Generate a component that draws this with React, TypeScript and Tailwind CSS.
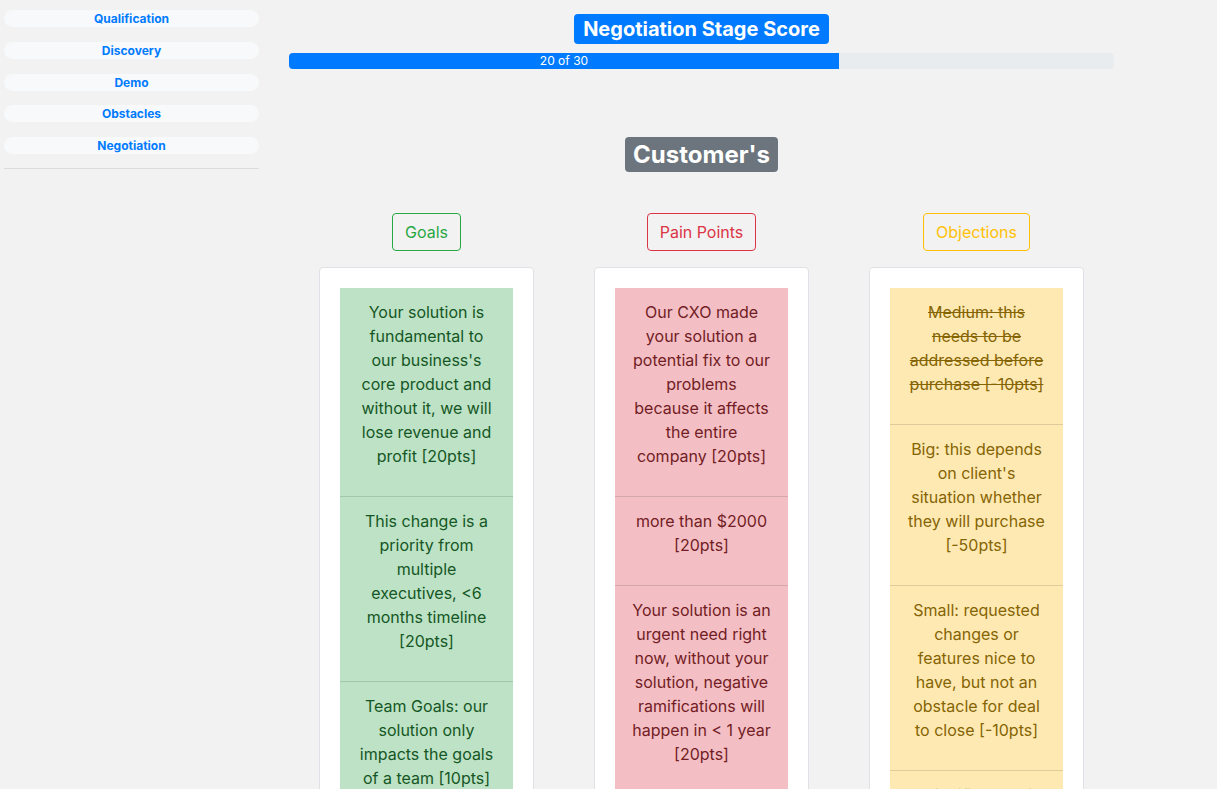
import type { FC } from "react";

type Item = { lines: string[]; struck?: boolean };

const stages = ["Qualification", "Discovery", "Demo", "Obstacles", "Negotiation"];

const columns: {
  title: string;
  btn: string;
  item: string;
  items: Item[];
}[] = [
  {
    title: "Goals",
    btn: "border-[#28a745] text-[#28a745]",
    item: "bg-[#bde2c6] text-[#155724]",
    items: [
      { lines: ["Your solution is", "fundamental to", "our business's", "core product and", "without it, we will", "lose revenue and", "profit [20pts]"] },
      { lines: ["This change is a", "priority from", "multiple", "executives, <6", "months timeline", "[20pts]"] },
      { lines: ["Team Goals: our", "solution only", "impacts the goals", "of a team [10pts]"] },
    ],
  },
  {
    title: "Pain Points",
    btn: "border-[#dc3545] text-[#dc3545]",
    item: "bg-[#f3bfc4] text-[#721c24]",
    items: [
      { lines: ["Our CXO made", "your solution a", "potential fix to our", "problems", "because it affects", "the entire", "company [20pts]"] },
      { lines: ["more than $2000", "[20pts]"] },
      { lines: ["Your solution is an", "urgent need right", "now, without your", "solution, negative", "ramifications will", "happen in < 1 year", "[20pts]"] },
    ],
  },
  {
    title: "Objections",
    btn: "border-[#ffc107] text-[#ffc107]",
    item: "bg-[#ffe9b2] text-[#856404]",
    items: [
      { lines: ["Medium: this", "needs to be", "addressed before", "purchase [-10pts]"], struck: true },
      { lines: ["Big: this depends", "on client's", "situation whether", "they will purchase", "[-50pts]"] },
      { lines: ["Small: requested", "changes or", "features nice to", "have, but not an", "obstacle for deal", "to close [-10pts]"] },
      { lines: ["Insignificant: this", "has little to no", "effect [0pts]"] },
    ],
  },
];

const Column: FC<(typeof columns)[number]> = ({ title, btn, item, items }) => (
  <div className="flex flex-col items-center">
    <button className={`rounded border bg-transparent px-3 py-1.5 text-base leading-6 ${btn}`}>{title}</button>
    <div className="mt-4 w-[215px] rounded border border-[#dee2e6] bg-white p-5">
      <ul>
        {items.map((it, i) => (
          <li key={i}
            className={`px-1 pt-3 pb-7 text-center text-base leading-6 ${item} ${i > 0 ? "border-t border-black/[.125]" : ""} ${it.struck ? "line-through" : ""}`}>
            {it.lines.map((l, j) => (
              <span key={j} className="block whitespace-nowrap">{l}</span>
            ))}
          </li>
        ))}
      </ul>
    </div>
  </div>
);

export default function App() {
  return (
    <div className="flex h-[789px] overflow-hidden bg-[#f2f2f2] font-['Inter','Liberation_Sans',sans-serif]">
      <aside className="w-[263px] shrink-0 px-1 pt-2.5">
        <nav className="flex flex-col gap-[14.75px]">
          {stages.map(s => (
            <a key={s} href="#"
              className="block rounded-full bg-[#f8f9fa] text-center text-xs leading-[17px] font-bold text-[#007bff]">
              {s}
            </a>
          ))}
        </nav>
        <hr className="mt-[14px] border-[#dcdcdc]" />
      </aside>

      <main className="ml-[26px] w-[825px] shrink-0">
        <div className="mt-[14px] flex justify-center">
          <span className="rounded bg-[#007bff] px-[9px] text-xl leading-[30px] font-bold text-white">Negotiation Stage Score</span>
        </div>
        <div className="mt-[9px] flex h-4 overflow-hidden rounded bg-[#e9ecef]">
          <div className="flex w-2/3 items-center justify-center bg-[#007bff] text-xs text-white">20 of 30</div>
        </div>

        <div className="mt-[68px] flex justify-center">
          <span className="rounded bg-[#6c757d] px-2 text-2xl leading-[35px] font-bold text-white">Customer's</span>
        </div>

        <div className="mt-[41px] grid grid-cols-3">
          {columns.map(c => <Column key={c.title} {...c} />)}
        </div>
      </main>
    </div>
  );
}
